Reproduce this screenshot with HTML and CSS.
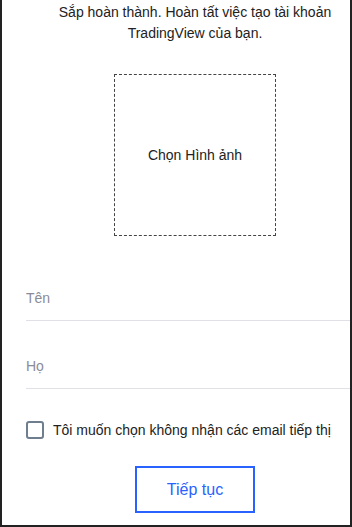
FILE: index.html
```html
<!DOCTYPE html>
<html lang="vi">

<head>
    <meta charset="UTF-8">
    <meta name="viewport" content="width=device-width, initial-scale=1.0">
    <title>TradingView - Hoàn tất tài khoản</title>
    <link rel="stylesheet" href="styles.css">
</head>

<body>
    <div class="frame">
        <div class="content">
            <p class="intro">Sắp hoàn thành. Hoàn tất việc tạo tài khoản TradingView của bạn.</p>

            <label class="avatar">
                <span>Chọn Hình ảnh</span>
            </label>

            <div class="field">
                <input type="text" class="input" placeholder="Tên">
            </div>
            <div class="field">
                <input type="text" class="input" placeholder="Họ">
            </div>

            <label class="check">
                <span class="box"></span>
                <span>Tôi muốn chọn không nhận các email tiếp thị</span>
            </label>

            <div class="actions">
                <button class="button">Tiếp tục</button>
            </div>
        </div>
    </div>
</body>

</html>
```

FILE: styles.css
```css
body {
    margin: 0;
    background-color: #fff;
    font-family: "Liberation Sans", Arial, sans-serif;
    color: #222;
}

.frame {
    width: 352px;
    height: 527px;
    box-sizing: border-box;
    border-left: 2px solid #222;
    border-right: 2px solid #222;
    border-bottom: 2px solid #222;
    overflow: hidden;
}

.content {
    width: 338px;
    padding-left: 24px;
    padding-top: 2px;
}

.intro {
    margin: 0;
    font-size: 14px;
    line-height: 21px;
    text-align: center;
}

.avatar {
    display: flex;
    justify-content: center;
    align-items: center;
    width: 162px;
    height: 162px;
    box-sizing: border-box;
    margin: 30px auto 0;
    border: 1px dashed #444;
    font-size: 14px;
    cursor: pointer;
}

.field {
    display: flex;
    align-items: flex-end;
    height: 68px;
    box-sizing: border-box;
    padding-bottom: 12px;
    border-bottom: 1px solid #e0e0e6;
}

.field:first-of-type {
    margin-top: 17px;
}

.input {
    width: 100%;
    border: none;
    outline: none;
    padding: 0;
    font-family: inherit;
    font-size: 14px;
    line-height: 20px;
    height: 20px;
    color: #222;
}

.input::placeholder {
    color: #8b8b98;
}

.check {
    display: flex;
    align-items: center;
    gap: 9px;
    margin-top: 32px;
    font-size: 14px;
    line-height: 18px;
    white-space: nowrap;
}

.box {
    width: 18px;
    height: 18px;
    box-sizing: border-box;
    border: 2px solid #6f7e8e;
    border-radius: 3px;
    flex-shrink: 0;
}

.actions {
    display: flex;
    justify-content: center;
    margin-top: 27px;
}

.button {
    width: 120px;
    height: 47px;
    border: 2px solid #2962ff;
    border-radius: 0;
    background-color: #fff;
    color: #2962ff;
    font-family: inherit;
    font-size: 16px;
    cursor: pointer;
}
```
